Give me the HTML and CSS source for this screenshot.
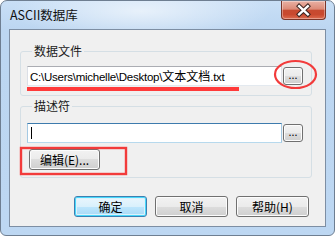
FILE: index.html
```html
<!DOCTYPE html>
<html>
<head>
<meta charset="utf-8">
<link rel="stylesheet" href="styles.css">
</head>
<body>
<div class="window">
  <div class="titlebar">
    <span class="title">ASCII数据库</span>
    <div class="close">
      <svg width="45" height="18" viewBox="0 0 45 18">
        <path d="M18.5 5 L27.5 13.5 M27.5 5 L18.5 13.5" stroke="#3b2420" stroke-width="4.4" stroke-linecap="square" fill="none"/>
        <path d="M18.5 5 L27.5 13.5 M27.5 5 L18.5 13.5" stroke="#ffffff" stroke-width="2.4" stroke-linecap="square" fill="none"/>
      </svg>
    </div>
  </div>
  <div class="client">
    <fieldset class="group g1">
      <legend>数据文件</legend>
      <div class="row">
        <div class="field"><span class="value">C:\Users\michelle\Desktop\<span class="cjk">文本文档</span>.txt</span></div>
        <button class="browse">...</button>
      </div>
    </fieldset>
    <fieldset class="group g2">
      <legend>描述符</legend>
      <div class="row">
        <div class="field focus"><span class="caret"></span></div>
        <button class="browse">...</button>
      </div>
      <button class="btn edit">编辑(E)...</button>
    </fieldset>
    <div class="actions">
      <button class="btn default">确定</button>
      <button class="btn">取消</button>
      <button class="btn">帮助(H)</button>
    </div>
  </div>
  <svg class="marks" width="335" height="236" viewBox="0 0 335 236">
    <rect x="27" y="87" width="212" height="4" fill="#ff3a3a"/>
    <ellipse cx="295.5" cy="74.5" rx="20.5" ry="13.5" fill="none" stroke="#f23b3b" stroke-width="2.2"/>
    <rect x="21" y="148" width="105" height="26" fill="none" stroke="#f23b3b" stroke-width="2.4"/>
  </svg>
</div>
</body>
</html>
```
FILE: styles.css
```css
* { box-sizing: border-box; }
html, body { margin: 0; padding: 0; background: #ffffff; }
body {
  font-family: "Noto Sans CJK SC", sans-serif;
  font-size: 12px;
  color: #000;
}
.window {
  position: relative;
  width: 335px;
  height: 236px;
  border: 1px solid #6e7e91;
  border-radius: 7px 7px 6px 6px;
  padding: 0 8px 8px 8px;
  background:
    radial-gradient(ellipse 130px 30px at 140px 10px, rgba(255,255,255,0.6), rgba(255,255,255,0) 100%),
    linear-gradient(to bottom, #c9dff6 0, #bcd6f1 28px, #bdd7f2 100%);
  display: flex;
  flex-direction: column;
}
.titlebar {
  height: 28px;
  display: flex;
  align-items: flex-start;
}
.title {
  margin-top: 6px;
  padding-left: 1px;
  font-family: "Noto Sans CJK SC", sans-serif;
  font-size: 12.5px;
  line-height: 16px;
  color: #101010;
}
.close {
  margin-left: auto;
  width: 45px;
  height: 19px;
  border: 1px solid #7a3529;
  border-top: none;
  border-radius: 0 0 4px 4px;
  background: linear-gradient(to bottom, #e9b1a4 0, #dc8a77 45%, #c74a30 52%, #c9492f 75%, #dd6c50 100%);
  box-shadow: inset 0 0 0 1px rgba(255,255,255,0.35);
  display: flex;
}
.close svg { display: block; margin: 0 0 0 -1px; }
.client {
  flex: 1;
  border: 1px solid #7d8ea3;
  background: #f0f0f0;
  padding: 14px 13px 0 10px;
  display: flex;
  flex-direction: column;
}
.group {
  margin: 0;
  border: 1px solid #d5dfe5;
  border-radius: 3px;
  padding: 8px 7px 9px 6px;
  min-width: 0;
}
.group legend {
  margin-left: 5px;
  padding: 0 2px;
  line-height: 14px;
  font-size: 12px;
  color: #1a1a1a;
}
.g2 { margin-top: 3px; padding-top: 10px; padding-bottom: 7px; }
.row {
  display: flex;
  align-items: flex-start;
  gap: 1px;
}
.field {
  width: 255px;
  height: 20px;
  background: #fff;
  border: 1px solid;
  border-color: #abadb3 #e2e3ea #e3e9ef #dbdfe6;
  display: flex;
  align-items: center;
  padding-left: 2px;
}
.field.focus { border-color: #3d7bad #a4c9e3 #b7d9ed #a4c9e3; }
.value {
  white-space: nowrap;
  line-height: 16px;
  font-family: "Liberation Sans", "Noto Sans CJK SC", sans-serif;
  font-size: 11.5px;
  letter-spacing: -0.25px;
}
.value .cjk { font-family: "Noto Sans CJK SC", sans-serif; font-size: 12px; letter-spacing: 0; }
.caret { width: 1px; height: 12px; background: #000; margin-left: 1px; }
.browse {
  margin-top: 1px;
  width: 20px;
  height: 18px;
  padding: 0 0 4px 0;
  border: 1px solid #707070;
  border-radius: 3px;
  background: linear-gradient(to bottom, #f2f2f2 0, #ebebeb 50%, #dddddd 50%, #cfcfcf 100%);
  box-shadow: inset 0 0 0 1px #fcfcfc;
  font-family: "Noto Sans", sans-serif;
  font-size: 11px;
  line-height: 10px;
  color: #000;
  display: flex;
  align-items: flex-end;
  justify-content: center;
}
.btn {
  height: 21px;
  padding: 0;
  border: 1px solid #707070;
  border-radius: 3px;
  background: linear-gradient(to bottom, #f2f2f2 0, #ebebeb 50%, #dddddd 50%, #cfcfcf 100%);
  box-shadow: inset 0 0 0 1px #fcfcfc;
  font-family: "Noto Sans CJK SC", sans-serif;
  font-size: 12px;
  line-height: 16px;
  color: #000;
}
.edit {
  margin-top: 6px;
  margin-left: 2px;
  width: 71px;
}
.actions {
  margin-top: 18px;
  display: flex;
  justify-content: flex-end;
  gap: 8px;
  padding-right: 3px;
}
.actions .btn { width: 73px; }
.btn.default {
  border-color: #3c7fb1;
  box-shadow: inset 0 0 0 1px #48d8fb, inset 0 0 0 2px #ddf1fb;
  background: linear-gradient(to bottom, #eaf6fd 0, #d9f0fc 50%, #bee6fd 50%, #a7d9f5 100%);
}
.marks {
  position: absolute;
  left: -1px;
  top: -1px;
  pointer-events: none;
}
```
